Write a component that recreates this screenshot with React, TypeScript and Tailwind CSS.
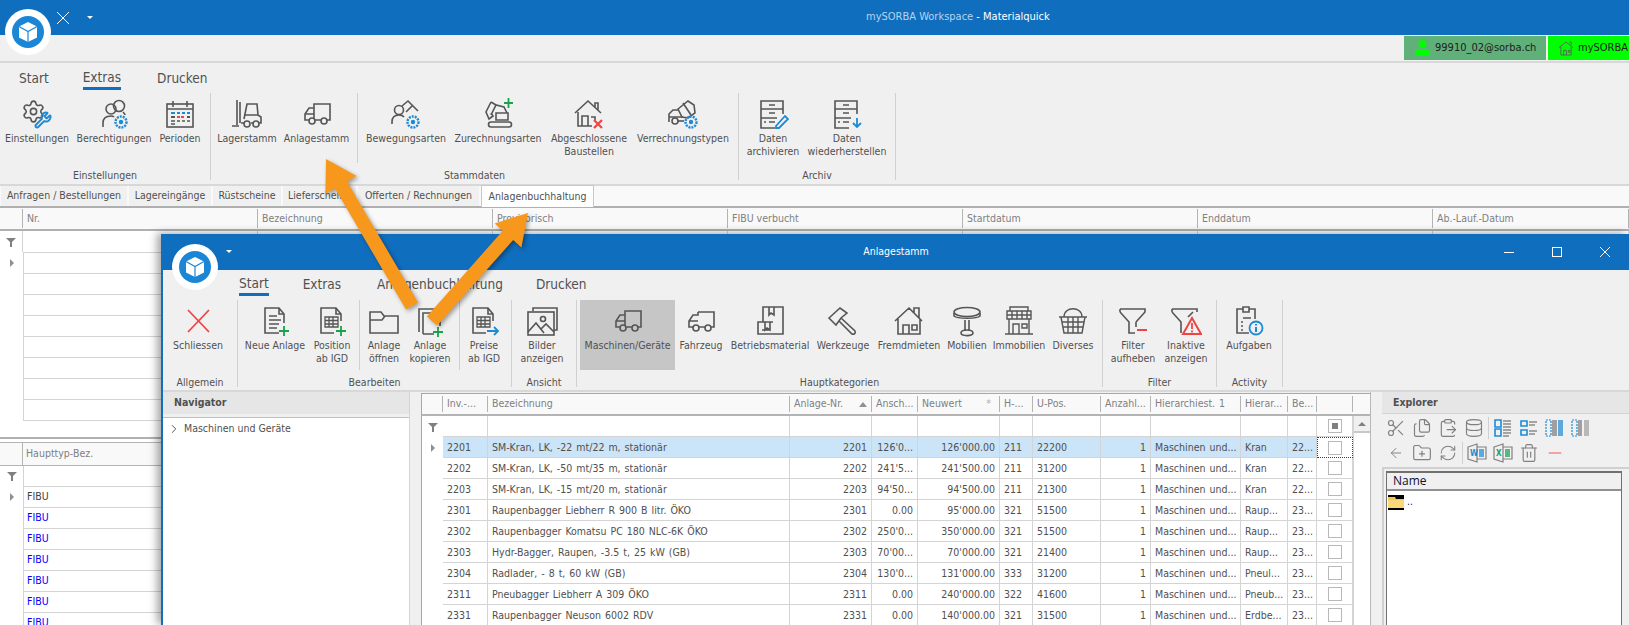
import type { ReactNode } from "react";
import { Scissors, Files, ClipboardPaste, Database, ArrowLeft, FolderPlus, RefreshCw, Trash2, Minus, ChevronRight, Settings, Wrench } from "lucide-react";

const GREY = "#555555";
const BLUE = "#1d8ad6";
const RED = "#ef4444";
const GREEN = "#16a34a";

function Ico({ children, size = 32 }: { children: ReactNode; size?: number }) {
  return (
    <svg width={size} height={size} viewBox="0 0 32 32" fill="none" stroke={GREY} strokeWidth="1.6">
      {children}
    </svg>
  );
}

function Plus({ x = 25, y = 26 }: { x?: number; y?: number }) {
  return <path d={`M${x - 5} ${y}h10M${x} ${y - 5}v10`} stroke={GREEN} strokeWidth="1.8" />;
}

function Gear({ x, y, r = 5 }: { x: number; y: number; r?: number }) {
  return (
    <g stroke={BLUE}>
      <circle cx={x} cy={y} r={r} strokeWidth="2.4" strokeDasharray="2 1" />
      <circle cx={x} cy={y} r={r * 0.4} fill={BLUE} stroke="none" />
    </g>
  );
}

const Truck = () => (
  <Ico>
    <path d="M13 21V6h16v16h-3M20 22h-6M8 22H4v-6l4-6h5M4 16h9" />
    <circle cx="11" cy="23" r="3" />
    <circle cx="23" cy="23" r="3" />
  </Ico>
);
const Van = () => (
  <Ico>
    <path d="M13 7h16v15h-3M20 22h-6M8 22H4v-6l4-6h5V7M4 16h9" />
    <circle cx="11" cy="23" r="3" />
    <circle cx="23" cy="23" r="3" />
  </Ico>
);
const GearWrench = () => (
  <Ico>
    <Settings x={0} y={1} width={25} height={25} color={GREY} strokeWidth={1.5} />
    <Wrench x={13} y={13} width={18} height={18} color={BLUE} strokeWidth={2.6} />
  </Ico>
);
const UsersGear = () => (
  <Ico>
    <circle cx="13" cy="11" r="5" />
    <circle cx="21" cy="8" r="5.5" />
    <path d="M5 29v-4c0-5 3-7 8-7 2 0 3 1 3 1" />
    <path d="M25 14c1 1 2 2 2 3" />
    <Gear x={23} y={24} r={5.5} />
  </Ico>
);
const Calendar = () => (
  <Ico>
    <rect x="3" y="6" width="26" height="23" />
    <path d="M3 11h26M9 3v6M23 3v6" />
    <path d="M7 15h4M13 15h3M18 15h3M23 15h3" stroke={BLUE} strokeWidth="2" />
    <path d="M7 19h4M23 19h3" stroke={GREY} strokeWidth="2" />
    <path d="M13 19h8" stroke={RED} strokeWidth="2" strokeDasharray="3 1" />
    <path d="M7 23h4M13 23h3M18 23h3M23 23h3M7 26h4" stroke={GREY} strokeWidth="1.6" />
  </Ico>
);
const Forklift = () => (
  <Ico>
    <path d="M6 2v25M9 4v21M1 28h7" />
    <path d="M13 21l3-15h10l1 11M13 17h14l3 2v6h-2M10 25h3M22 25h-2" />
    <circle cx="16" cy="26" r="3" />
    <circle cx="25" cy="26" r="3" />
  </Ico>
);
const Crane = () => (
  <Ico>
    <circle cx="9" cy="12" r="4.5" />
    <path d="M2 26v-2c0-5 3-7 7-7 2 0 4 .5 5 2M12 8l6-5 10 10M22 8l-6 6" />
    <Gear x={23} y={24} r={5.5} />
  </Ico>
);
const ExcavatorPlus = () => (
  <Ico>
    <path d="M9 17L14 7l8 2 3 6M9 4L4 14l3 7 4-3-2-3M9 4l5 3" />
    <path d="M14 15h12v7H14z" />
    <path d="M9 24h18a2.5 2.5 0 0 1 0 5H9a2.5 2.5 0 0 1 0-5z" />
    <path d="M22 5h9M26.5 0v10" stroke={GREEN} strokeWidth="1.8" />
  </Ico>
);
const HouseX = () => (
  <Ico>
    <path d="M2 15L15 3l13 12M5 14v14h14M22 9V5h3v7M9 28V18h6v10M18 19h4v3" />
    <path d="M21 22l8 8M29 22l-8 8" stroke={RED} strokeWidth="2.2" />
  </Ico>
);
const Mixer = () => (
  <Ico>
    <path d="M11 11l10-8 6 4 1 8-7 5-6-1z" />
    <path d="M16 5l8 12M2 24v-8l4-4h5M2 19h14" />
    <circle cx="8" cy="23" r="3" />
    <path d="M11 23h6" />
    <Gear x={24} y={24} r={5.5} />
  </Ico>
);
const Cabinet = ({ children }: { children: ReactNode }) => (
  <Ico>
    <path d="M26 16V3H4v27h14M4 11h22M4 20h16M12 7h6M12 15h6M12 24h6M7 24h2" />
    {children}
  </Ico>
);
const RedX = () => (
  <Ico>
    <path d="M6 5l21 22M27 5L6 27" stroke={RED} strokeWidth="1.8" />
  </Ico>
);
const DocLines = ({ children }: { children?: ReactNode }) => (
  <Ico>
    <path d="M20 28H6V3h14l5 6v9M20 3v6h5M10 11h8M10 15h12M10 19h10M10 23h8" />
    {children}
  </Ico>
);
const DocGrid = ({ children }: { children?: ReactNode }) => (
  <Ico>
    <path d="M18 28H5V3h15l5 6v7M20 3v6h5" />
    <path d="M9 12h13v10H9zM9 15.5h13M9 19h13M13 12v10M17 12v10" strokeWidth="1.3" />
    {children}
  </Ico>
);
const Folder = () => (
  <Ico>
    <path d="M2 28V7h11l3 4h14v17zM2 15h12l3-4" />
  </Ico>
);
const CopyPlus = () => (
  <Ico>
    <path d="M5 27V4h17M9 29V8h17v13M9 29h11" />
    <Plus x={24} y={27} />
  </Ico>
);
const Images = () => (
  <Ico>
    <path d="M7 6V3h24v22h-3" />
    <rect x="2" y="7" width="26" height="23" />
    <circle cx="17" cy="14" r="2.5" />
    <path d="M2 27l8-9 8 10M15 24l5-5 8 8" />
  </Ico>
);
const Box = () => (
  <Ico>
    <path d="M9 17V2h20v27H4V17h15M15 2v8l2-2 3 2V2M11 17v8l2-2 3 2v-8M8 25h8" />
  </Ico>
);
const Hammer = () => (
  <Ico>
    <path d="M2 13L13 3l7 5-6 5-5 7zM14 13l14 13c1 2-1 4-3 3L12 16" />
  </Ico>
);
const House = () => (
  <Ico>
    <path d="M2 16L16 3l13 13M5 14v15h22V14M21 8V3h5v10M10 29V20h6v9M19 20h5v5h-5z" />
  </Ico>
);
const Table = () => (
  <Ico>
    <ellipse cx="16" cy="7" rx="13" ry="4.5" />
    <path d="M3 8v3c3 3 23 3 26 0V8M14 15v10M18 15v10M10 28c0-4 12-4 12 0s-12 3-12 0z" />
  </Ico>
);
const Shop = () => (
  <Ico>
    <path d="M7 2h18v4H7zM4 6h24v8H4zM4 10h24M9 6v8M14 6v8M19 6v8M24 6v8M6 14v15h20V14M2 29h28M10 29V19h6v10M19 19h5v4h-5z" strokeWidth="1.4" />
  </Ico>
);
const Basket = () => (
  <Ico>
    <path d="M7 12C7 1 25 1 25 12M2 12h28M4 12l3 16h18l3-16M5 17h22M6 22h20M11 12v16M16 12v16M21 12v16" strokeWidth="1.4" />
  </Ico>
);
const FilterMinus = () => (
  <Ico>
    <path d="M3 4h25v3l-9 10M3 7l9 10v11h6M3 4v3M19 17v5" />
    <path d="M20 25h10" stroke={RED} strokeWidth="2" />
  </Ico>
);
const FilterWarn = () => (
  <Ico>
    <path d="M2 4h25v3M2 7l9 10v11M2 4v3M23 7l-5 5" />
    <path d="M22 13l9 16H13z" stroke={RED} strokeWidth="2" />
    <path d="M22 18v6M22 25.5v2" stroke={RED} strokeWidth="1.8" />
  </Ico>
);
const ClipInfo = () => (
  <Ico>
    <path d="M10 4H4v24h12M22 14V4h-6M10 2h6v5h-6zM10 13h8M13 13h5M8 17h2M8 21h2M8 25h2" />
    <circle cx="23" cy="23" r="6.5" stroke={BLUE} strokeWidth="1.8" />
    <path d="M23 22v5M23 19v1.6" stroke={BLUE} strokeWidth="2" />
  </Ico>
);

function Logo() {
  return (
    <div className="flex size-[46px] items-center justify-center rounded-full bg-white">
      <div className="flex size-[32px] items-center justify-center rounded-full bg-[#1b86d6]">
        <svg width="22" height="22" viewBox="0 0 22 22">
          <path d="M11 1l9 4.5v11L11 21l-9-4.5v-11z" fill="#fff" />
          <path d="M2 5.5l9 5 9-5M11 10.5V21" stroke="#1b86d6" strokeWidth="1.2" fill="none" />
        </svg>
      </div>
    </div>
  );
}

function Caret({ className = "" }: { className?: string }) {
  return <div className={`h-0 w-0 border-x-[3px] border-t-[3px] border-x-transparent border-t-white ${className}`} />;
}

type Item = { w: string; icon?: ReactNode; lines?: string[]; active?: boolean; sep?: boolean };

function RibbonItem({ w, icon, lines, active }: Item) {
  return (
    <div className={`${w} flex h-[70px] flex-col items-center pt-[6px] ${active ? "bg-[#c6c6c6]" : ""}`}>
      <div className="flex h-[30px] items-center justify-center">{icon}</div>
      <div className="mt-[3px] text-center leading-[13px] whitespace-nowrap">
        {lines?.map((l) => (
          <div key={l}>{l}</div>
        ))}
      </div>
    </div>
  );
}

function Group({ label, items }: { label: string; items: Item[] }) {
  return (
    <div className="flex h-[87px]">
      <div className="flex flex-col">
        <div className="flex h-[70px]">
          {items.map((it, i) =>
            it.sep ? (
              <div key={i} className="h-[70px] w-px bg-[#d0d0d0]" />
            ) : (
              <RibbonItem key={i} {...it} />
            ),
          )}
        </div>
        <div className="flex h-[17px] items-center justify-center pt-[9px]">{label}</div>
      </div>
      <div className="h-[87px] w-px bg-[#d0d0d0]" />
    </div>
  );
}

const mainGroups: { label: string; items: Item[] }[] = [
  {
    label: "Einstellungen",
    items: [
      { w: "w-[74px]", icon: <GearWrench />, lines: ["Einstellungen"] },
      { w: "w-[80px]", icon: <UsersGear />, lines: ["Berechtigungen"] },
      { w: "w-[52px]", icon: <Calendar />, lines: ["Perioden"] },
      { w: "w-[4px]" },
    ],
  },
  {
    label: "Stammdaten",
    items: [
      { w: "w-[72px]", icon: <Forklift />, lines: ["Lagerstamm"] },
      { w: "w-[67px]", icon: <Truck />, lines: ["Anlagestamm"] },
      { w: "w-[7px]" },
      { w: "", sep: true },
      { w: "w-[96px]", icon: <Crane />, lines: ["Bewegungsarten"] },
      { w: "w-[88px]", icon: <ExcavatorPlus />, lines: ["Zurechnungsarten"] },
      { w: "w-[94px]", icon: <HouseX />, lines: ["Abgeschlossene", "Baustellen"] },
      { w: "w-[94px]", icon: <Mixer />, lines: ["Verrechnungstypen"] },
      { w: "w-[8px]" },
    ],
  },
  {
    label: "Archiv",
    items: [
      {
        w: "w-[68px]",
        icon: (
          <Cabinet>
            <path d="M19 28l9-10 3 3-9 9h-3z" stroke={BLUE} strokeWidth="1.8" />
          </Cabinet>
        ),
        lines: ["Daten", "archivieren"],
      },
      {
        w: "w-[80px]",
        icon: (
          <Cabinet>
            <path d="M26 20v9M22 25l4 4 4-4" stroke={BLUE} strokeWidth="1.8" />
          </Cabinet>
        ),
        lines: ["Daten", "wiederherstellen"],
      },
      { w: "w-[8px]" },
    ],
  },
];

const winGroups: { label: string; items: Item[] }[] = [
  {
    label: "Allgemein",
    items: [
      { w: "w-[70px]", icon: <RedX />, lines: ["Schliessen"] },
      { w: "w-[4px]" },
    ],
  },
  {
    label: "Bearbeiten",
    items: [
      { w: "w-[74px]", icon: <DocLines><Plus /></DocLines>, lines: ["Neue Anlage"] },
      { w: "w-[40px]", icon: <DocGrid><Plus /></DocGrid>, lines: ["Position", "ab IGD"] },
      { w: "w-[7px]" },
      { w: "", sep: true },
      { w: "w-[48px]", icon: <Folder />, lines: ["Anlage", "öffnen"] },
      { w: "w-[44px]", icon: <CopyPlus />, lines: ["Anlage", "kopieren"] },
      { w: "w-[7px]" },
      { w: "", sep: true },
      {
        w: "w-[48px]",
        icon: (
          <DocGrid>
            <path d="M19 26h11M26 22l4 4-4 4" stroke={BLUE} strokeWidth="1.8" />
          </DocGrid>
        ),
        lines: ["Preise", "ab IGD"],
      },
      { w: "w-[3px]" },
    ],
  },
  {
    label: "Ansicht",
    items: [
      { w: "w-[60px]", icon: <Images />, lines: ["Bilder", "anzeigen"] },
      { w: "w-[4px]" },
    ],
  },
  {
    label: "Hauptkategorien",
    items: [
      { w: "w-[3px]" },
      { w: "w-[95px]", icon: <Truck />, lines: ["Maschinen/Geräte"], active: true },
      { w: "w-[52px]", icon: <Van />, lines: ["Fahrzeug"] },
      { w: "w-[86px]", icon: <Box />, lines: ["Betriebsmaterial"] },
      { w: "w-[60px]", icon: <Hammer />, lines: ["Werkzeuge"] },
      { w: "w-[72px]", icon: <House />, lines: ["Fremdmieten"] },
      { w: "w-[44px]", icon: <Table />, lines: ["Mobilien"] },
      { w: "w-[60px]", icon: <Shop />, lines: ["Immobilien"] },
      { w: "w-[48px]", icon: <Basket />, lines: ["Diverses"] },
      { w: "w-[5px]" },
    ],
  },
  {
    label: "Filter",
    items: [
      { w: "w-[60px]", icon: <FilterMinus />, lines: ["Filter", "aufheben"] },
      { w: "w-[46px]", icon: <FilterWarn />, lines: ["Inaktive", "anzeigen"] },
      { w: "w-[7px]" },
    ],
  },
  {
    label: "Activity",
    items: [
      { w: "w-[64px]", icon: <ClipInfo />, lines: ["Aufgaben"] },
      { w: "w-[1px]" },
    ],
  },
];

const tabs = [
  { t: "Anfragen / Bestellungen", w: "w-[126px]" },
  { t: "Lagereingänge", w: "w-[82px]" },
  { t: "Rüstscheine", w: "w-[68px]" },
  { t: "Lieferscheine", w: "w-[73px]" },
  { t: "Offerten / Rechnungen", w: "w-[121px]" },
];

const topCols = ["Nr.", "Bezeichnung", "Provisorisch", "FIBU verbucht", "Startdatum", "Enddatum", "Ab.-Lauf.-Datum"];

const TOP_GRID = "grid grid-cols-[23px_235px_235px_235px_235px_235px_235px_1fr]";

// text as it shows in the narrow columns, "..." included
const rows = [
  ["2201", "SM-Kran, LK, -22 mt/22 m, stationär", "2201", "126'0...", "126'000.00", "211", "22200", "Kran", "22..."],
  ["2202", "SM-Kran, LK, -50 mt/35 m, stationär", "2202", "241'5...", "241'500.00", "211", "31200", "Kran", "22..."],
  ["2203", "SM-Kran, LK, -15 mt/20 m, stationär", "2203", "94'50...", "94'500.00", "211", "21300", "Kran", "22..."],
  ["2301", "Raupenbagger Liebherr R 900 B litr. ÖKO", "2301", "0.00", "95'000.00", "321", "51500", "Raup...", "23..."],
  ["2302", "Raupenbagger Komatsu PC 180 NLC-6K ÖKO", "2302", "250'0...", "350'000.00", "321", "51500", "Raup...", "23..."],
  ["2303", "Hydr-Bagger, Raupen, -3.5 t, 25 kW (GB)", "2303", "70'00...", "70'000.00", "321", "21400", "Raup...", "23..."],
  ["2304", "Radlader, - 8 t,  60 kW (GB)", "2304", "130'0...", "131'000.00", "333", "31200", "Pneul...", "23..."],
  ["2311", "Pneubagger Liebherr A 309 ÖKO", "2311", "0.00", "240'000.00", "322", "41600", "Pneub...", "23..."],
  ["2331", "Raupenbagger Neuson 6002 RDV", "2331", "0.00", "140'000.00", "321", "31500", "Erdbe...", "23..."],
];

const GRID = "grid grid-cols-[21px_45px_302px_82px_46px_82px_33px_68px_50px_90px_47px_29px_36px]";

const heads = ["", "Inv.-...", "Bezeichnung", "Anlage-Nr.", "Ansch...", "Neuwert", "H-...", "U-Pos.", "Anzahl...", "Hierarchiest. 1", "Hierar...", "Be...", ""];

function FilterIcon() {
  return (
    <svg width="10" height="10" viewBox="0 0 10 10">
      <path d="M0 1h10L6 5v5H4V5z" fill="#808080" />
    </svg>
  );
}

function RowMark() {
  return <div className="h-0 w-0 border-y-4 border-l-4 border-y-transparent border-l-[#909090]" />;
}

function Check({ mixed }: { mixed?: boolean }) {
  return (
    <div className="flex size-[14px] items-center justify-center border border-[#b8b8b8] bg-white">
      {mixed && <div className="size-[6px] bg-[#808080]" />}
    </div>
  );
}

function DataGrid() {
  return (
    <div className="relative w-[949px] overflow-hidden border-t border-l border-[#a8a8a8] bg-white [word-spacing:1px]">
      <div className="h-[22px] border-b-2 border-[#b4b4b4] bg-[#f9f9f9] text-[#808080]">
        <div className={`${GRID} h-[20px]`}>
          {heads.map((h, i) => (
            <div key={i} className="my-[2px] flex items-center justify-between overflow-hidden border-r border-[#b4b4b4] px-1 whitespace-nowrap">
              <span>{h}</span>
              {h === "Anlage-Nr." && <div className="ml-1 h-0 w-0 shrink-0 border-x-4 border-b-[5px] border-x-transparent border-b-[#909090]" />}
              {h === "Neuwert" && <span className="mr-1 text-[#b0b0b0]">*</span>}
            </div>
          ))}
        </div>
      </div>
      <div className={`${GRID} h-[21px]`}>
        {heads.map((_, i) => (
          <div key={i} className={`flex items-center justify-center ${i ? "border-r border-b border-[#d4d4d4]" : ""}`}>
            {i === 0 && <FilterIcon />}
            {i === 12 && <Check mixed />}
          </div>
        ))}
      </div>
      {rows.map((r, ri) => {
        const cells = [r[0], r[1], r[2], r[3], r[4], r[5], r[6], "1", "Maschinen und...", r[7], r[8]];
        const rightAligned = [2, 3, 4, 7];
        return (
          <div key={r[0]} className={`${GRID} h-[21px] text-[#505050]`}>
            <div className="flex items-center justify-center">{ri === 0 && <RowMark />}</div>
            {cells.map((c, i) => (
              <div
                key={i}
                className={`overflow-hidden border-r border-b border-[#d4d4d4] px-1 leading-[20px] whitespace-nowrap ${rightAligned.includes(i) ? "text-right" : ""} ${ri === 0 ? "bg-[#cce4f7]" : ""}`}
              >
                {c}
              </div>
            ))}
            <div className={`flex items-center justify-center ${ri === 0 ? "border border-dotted border-[#404040]" : "border-r border-b border-[#d4d4d4]"}`}>
              <Check />
            </div>
          </div>
        );
      })}
      <div className="absolute top-[22px] right-0 flex h-[400px] w-[17px] flex-col border-l border-[#d4d4d4] bg-white">
        <div className="flex h-[17px] items-center justify-center border-b-2 border-[#c8c8c8] bg-[#f0f0f0]">
          <div className="h-0 w-0 border-x-4 border-b-[4px] border-x-transparent border-b-[#808080]" />
        </div>
      </div>
    </div>
  );
}

function ListViewIcon({ variant }: { variant: number }) {
  if (variant < 2) {
    return (
      <svg width="20" height="20" viewBox="0 0 20 20" fill="none">
        <path d={variant === 0 ? "M2 2h6v7H2zM2 11h6v7H2z" : "M2 3h6v5H2zM2 12h6v5H2z"} stroke={BLUE} strokeWidth="1.6" />
        <path d={variant === 0 ? "M10 3h8M10 6h8M10 9h8M10 12h8M10 15h8M10 18h6" : "M10 4h8M10 7h6M10 13h8M10 16h6"} stroke="#8a8a8a" strokeWidth="1.4" />
      </svg>
    );
  }
  return (
    <svg width="20" height="20" viewBox="0 0 20 20" fill="none">
      <path d="M1 2h5v16H1z" stroke={BLUE} strokeWidth="1.2" strokeDasharray="2 1" />
      <path d={variant === 2 ? "M7 2h5v16H7z" : "M7 2h4v16H7z"} fill="#a0a0a0" />
      <path d="M13 2h5v16h-5z" fill={variant === 2 ? BLUE : "#a0a0a0"} opacity="0.7" />
    </svg>
  );
}

function BookIcon({ letter, color }: { letter: string; color: string }) {
  return (
    <svg width="20" height="20" viewBox="0 0 20 20" fill="none">
      <path d="M1 4l9-3v18l-9-3zM10 4h9v12h-9" stroke="#808080" strokeWidth="1.2" />
      <rect x="12" y="6" width="5" height="8" fill={color} opacity="0.7" />
      <text x="3" y="13" fontSize="8" fontWeight="700" fill={color}>{letter}</text>
    </svg>
  );
}

function Slot({ children }: { children: ReactNode }) {
  return <div className="flex w-[26px] items-center justify-center text-[#808080]">{children}</div>;
}

export default function App() {
  return (
    <div className="relative h-[625px] w-[1629px] overflow-hidden bg-white font-['DejaVu_Sans_Condensed','DejaVu_Sans',sans-serif] text-[10.5px] text-[#505050]">
      {/* main window */}
      <div className="flex h-[35px] items-center bg-[#106ebe] pl-[57px]">
        <svg width="12" height="12" viewBox="0 0 12 12" stroke="#fff" strokeWidth="1">
          <path d="M0 0l12 12M12 0L0 12" />
        </svg>
        <Caret className="ml-[18px]" />
        <span className="ml-[773px] text-[11px] whitespace-nowrap text-[#b5d3ee]">
          mySORBA Workspace <span className="text-white">- Materialquick</span>
        </span>
      </div>
      <div className="absolute top-[9px] left-[5px]">
        <Logo />
      </div>
      <div className="flex h-[28px] items-start justify-end gap-[2px] border-b-2 border-[#d8d8d8] bg-[#f0f0f0] pt-px">
        <div className="flex h-[24px] w-[142px] items-center gap-[5px] bg-[#5fb179] pl-[11px] text-[11px] text-[#202020]">
          <svg width="15" height="16" viewBox="0 0 15 16" fill="#00ff00">
            <circle cx="7.5" cy="4" r="4" />
            <path d="M0 16v-3c0-3 3-4 7.5-4s7.5 1 7.5 4v3z" />
          </svg>
          99910_02@sorba.ch
        </div>
        <div className="flex h-[24px] w-[81px] items-center gap-[5px] bg-[#00ff00] pl-[11px] text-[11px] text-[#202020]">
          <svg width="14" height="15" viewBox="0 0 15 16" fill="none" stroke="#606060">
            <path d="M0 7l7.5-6L15 7M2 6v9h11V6M5 15v-5h3v5M10 10h2v2h-2zM11 1h2v3" />
          </svg>
          mySORBA
        </div>
      </div>
      <div className="bg-[#f0f0f0]">
        <div className="flex h-[30px] items-start pt-[5px] pl-[19px] text-[13.5px] text-[#505050]">
          <span>Start</span>
          <span className="ml-[34px] border-b-[3px] border-[#106ebe] leading-[19px]">Extras</span>
          <span className="ml-[36px]">Drucken</span>
        </div>
        <div className="flex h-[91px] items-start">
          {mainGroups.map((g) => (
            <Group key={g.label} {...g} />
          ))}
        </div>
      </div>
      <div className="flex h-[24px] items-start border-y-2 border-t-[#d8d8d8] border-b-[#b0b0b0] bg-[#f9f9f9] pl-px">
        {tabs.map((t) => (
          <div key={t.t} className={`${t.w} mr-[2px] flex h-[20px] items-center justify-center bg-[#f0f0f0] whitespace-nowrap`}>
            {t.t}
          </div>
        ))}
        <div className="-mt-px flex h-[22px] w-[113px] items-center justify-center border-x border-t border-[#c8c8c8] bg-white whitespace-nowrap">Anlagenbuchhaltung</div>
      </div>
      {/* top grid */}
      <div className={`${TOP_GRID} h-[23px] border-b-2 border-[#b0b0b0] bg-[#f9f9f9] text-[#808080]`}>
        <div className="my-[1px] border-r border-[#b4b4b4]" />
        {topCols.map((c) => (
          <div key={c} className="my-[1px] flex items-center border-r border-[#b4b4b4] px-1">
            {c}
          </div>
        ))}
      </div>
      <div className={`${TOP_GRID} h-[21px]`}>
        <div className="flex items-center justify-center border-r border-[#d4d4d4]">
          <FilterIcon />
        </div>
        {topCols.map((c) => (
          <div key={c} className="border-r border-[#d4d4d4]" />
        ))}
      </div>
      {Array.from({ length: 8 }, (_, i) => (
        <div key={i} className="flex h-[21px]">
          <div className="flex w-[23px] items-center justify-center">{i === 0 && <RowMark />}</div>
          <div className="flex-1 border-t border-l border-[#d4d4d4]" />
        </div>
      ))}
      <div className="ml-[23px] h-px bg-[#d4d4d4]" />
      <div className="h-[16px]" />
      {/* lower grid */}
      <div className="h-[5px] border-t-2 border-[#b0b0b0]" />
      <div className="flex h-[24px] border-y border-[#b4b4b4] bg-[#f9f9f9] text-[#808080]">
        <div className="w-[23px] border-r border-[#b4b4b4]" />
        <div className="flex items-center px-[3px]">Haupttyp-Bez.</div>
      </div>
      <div className="flex h-[20px]">
        <div className="flex w-[23px] items-center justify-center"><FilterIcon /></div>
        <div className="flex-1 border-l border-[#d4d4d4]" />
      </div>
      {Array.from({ length: 7 }, (_, i) => (
        <div key={i} className="flex h-[21px]">
          <div className="flex w-[23px] items-center justify-center">{i === 0 && <RowMark />}</div>
          <div className={`flex flex-1 items-center border-t border-l border-[#d4d4d4] px-[3px] ${i === 0 ? "text-[#404040]" : "text-[#0000ff]"}`}>FIBU</div>
        </div>
      ))}

      {/* Anlagestamm window, floats over the main one */}
      <div className="absolute top-[234px] left-[161px] flex h-[391px] w-[1468px] flex-col border-l-2 border-[#106ebe] bg-[#f0f0f0] shadow-[-4px_-1px_8px_rgba(0,0,0,0.35)]">
        <div className="grid h-[36px] shrink-0 grid-cols-[1fr_auto_1fr] items-center bg-[#106ebe] text-white">
          <Caret className="ml-[63px] -mt-[1px]" />
          <span>Anlagestamm</span>
          <div className="flex items-center justify-end gap-[38px] pr-[19px]">
            <div className="h-px w-[10px] bg-white" />
            <div className="size-[10px] border border-white" />
            <svg width="10" height="10" viewBox="0 0 10 10" stroke="#fff">
              <path d="M0 0l10 10M10 0L0 10" />
            </svg>
          </div>
        </div>
        <div className="absolute top-[10px] left-[9px]">
          <Logo />
        </div>
        <div className="flex h-[30px] shrink-0 items-start pt-[4px] pl-[76px] text-[13.5px]">
          <span className="border-b-[3px] border-[#106ebe] leading-[19px]">Start</span>
          <span className="ml-[34px]">Extras</span>
          <span className="ml-[36px]">Anlagenbuchhaltung</span>
          <span className="ml-[33px]">Drucken</span>
        </div>
        <div className="flex h-[92px] shrink-0 items-start border-b-2 border-[#d8d8d8]">
          {winGroups.map((g) => (
            <Group key={g.label} {...g} />
          ))}
        </div>
        <div className="flex min-h-0 flex-1">
          <div className="flex w-[247px] shrink-0 flex-col border-r border-[#d4d4d4]">
            <div className="flex h-[22px] shrink-0 items-center bg-[#e6e6e6] pl-[11px] font-bold">Navigator</div>
            <div className="mt-[3px] flex-1 border-t border-[#c0c0c0] bg-white">
              <div className="flex items-center gap-[3px] pt-[3px] pl-[4px]">
                <ChevronRight size={14} strokeWidth={1.5} color="#404040" />
                Maschinen und Geräte
              </div>
            </div>
          </div>
          <div className="w-[11px] shrink-0" />
          <div className="flex h-[233px] pt-px">
            <DataGrid />
          </div>
          <div className="w-[12px] shrink-0 border-l border-[#b8b8b8]" />
          <div className="flex flex-1 flex-col">
            <div className="flex h-[22px] shrink-0 items-center border-b border-[#d4d4d4] bg-[#e6e6e6] pl-[11px] font-bold">Explorer</div>
            <div className="flex h-[26px] items-center pt-[2px] pl-px">
              <Slot><Scissors size={20} strokeWidth={1.4} /></Slot>
              <Slot><Files size={20} strokeWidth={1.4} /></Slot>
              <Slot><ClipboardPaste size={20} strokeWidth={1.4} /></Slot>
              <Slot><Database size={20} strokeWidth={1.4} /></Slot>
              <div className="mx-[1px] h-[22px] w-px bg-[#d0d0d0]" />
              <Slot><ListViewIcon variant={0} /></Slot>
              <Slot><ListViewIcon variant={1} /></Slot>
              <Slot><ListViewIcon variant={2} /></Slot>
              <Slot><ListViewIcon variant={3} /></Slot>
            </div>
            <div className="flex h-[25px] items-center pl-px">
              <Slot><ArrowLeft size={16} strokeWidth={1.4} /></Slot>
              <Slot><FolderPlus size={20} strokeWidth={1.4} /></Slot>
              <Slot><RefreshCw size={18} strokeWidth={1.4} /></Slot>
              <div className="mx-[1px] h-[22px] w-px bg-[#d0d0d0]" />
              <Slot><BookIcon letter="W" color={BLUE} /></Slot>
              <Slot><BookIcon letter="X" color={GREEN} /></Slot>
              <Slot><Trash2 size={20} strokeWidth={1.4} /></Slot>
              <Slot><Minus size={20} strokeWidth={1.6} color="#f08a8a" /></Slot>
            </div>
            <div className="mt-[2px] flex-1 border-t-2 border-l-2 border-[#d0d0d0] pt-[2px] pr-[7px] pl-[2px]">
              <div className="h-full border-x border-t-2 border-[#707070] bg-white">
                <div className="flex h-[18px] items-center border-b-2 border-[#909090] bg-[#f0f0f0] pl-[6px] font-['Open_Sans',sans-serif] text-[12px] text-[#101030]">Name</div>
                <div className="flex items-end gap-[3px] pt-[3px] pl-[1px] text-[#202060]">
                  <svg width="16" height="15" viewBox="0 0 16 15">
                    <path d="M0 0h16v15H0z" fill="#000" />
                    <path d="M0 2h7l1 2h8v9H0z" fill="#f6c453" />
                    <path d="M0 5h16v8H0z" fill="#fbd97a" />
                  </svg>
                  ..
                </div>
              </div>
            </div>
          </div>
        </div>
      </div>

      {/* orange call-out arrows */}
      <svg className="pointer-events-none absolute top-0 left-0 drop-shadow-[2px_2px_2px_rgba(0,0,0,0.35)]" width="1629" height="625" fill="#f7981d">
        <polygon points="326,159 356.6,176 347,181.5 418,302.5 406,309.5 335,188.5 325.4,194" />
        <polygon points="528,213 521.4,247.4 513.2,240 437.2,325.6 426.8,316.4 502.8,230.8 494.6,223.4" />
      </svg>
    </div>
  );
}
